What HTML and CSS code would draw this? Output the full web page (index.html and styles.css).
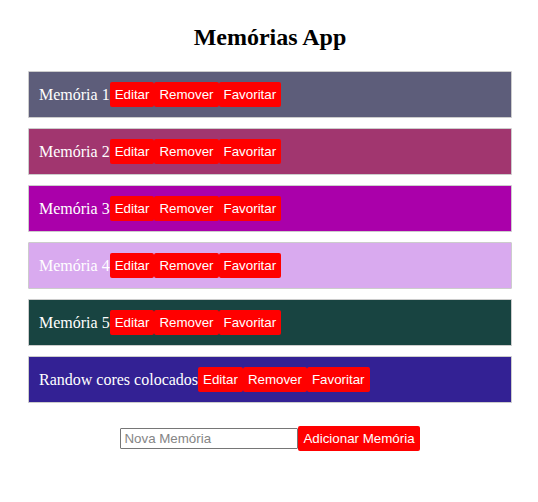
FILE: index.html
```html
<!DOCTYPE html>
<html lang="pt-BR">
<head>
<meta charset="utf-8">
<title>Memórias App</title>
<link rel="stylesheet" href="styles.css">
</head>
<body>
<main class="app">
  <h1 class="title">Memórias App</h1>
  <ul class="list">
    <li class="memory slate"><span>Memória 1</span><button type="button">Editar</button><button type="button">Remover</button><button type="button">Favoritar</button></li>
    <li class="memory berry"><span>Memória 2</span><button type="button">Editar</button><button type="button">Remover</button><button type="button">Favoritar</button></li>
    <li class="memory magenta"><span>Memória 3</span><button type="button">Editar</button><button type="button">Remover</button><button type="button">Favoritar</button></li>
    <li class="memory lilac"><span>Memória 4</span><button type="button">Editar</button><button type="button">Remover</button><button type="button">Favoritar</button></li>
    <li class="memory pine"><span>Memória 5</span><button type="button">Editar</button><button type="button">Remover</button><button type="button">Favoritar</button></li>
    <li class="memory indigo"><span>Randow cores colocados</span><button type="button">Editar</button><button type="button">Remover</button><button type="button">Favoritar</button></li>
  </ul>
  <form class="new-memory">
    <input type="text" placeholder="Nova Memória" aria-label="Nova Memória">
    <button type="submit">Adicionar Memória</button>
  </form>
</main>
</body>
</html>
```
FILE: styles.css
```css
* {
  box-sizing: border-box;
}

body {
  margin: 0;
  background: #fff;
  color: #000;
  font-family: "Liberation Serif", "Times New Roman", serif;
  font-size: 16px;
}

.app {
  padding: 24px 26px 24px 28px;
}

.title {
  margin: 0 0 20px;
  font-size: 24px;
  line-height: 27px;
  text-align: center;
}

.list {
  display: flex;
  flex-direction: column;
  gap: 10px;
  margin: 0;
  padding: 0;
  list-style: none;
}

.memory {
  display: flex;
  align-items: center;
  padding: 10px;
  border: 1px solid #ccc;
  border-radius: 1px;
  color: #fff;
}

.slate { background: #5d5d7a; }
.berry { background: #a1366f; }
.magenta { background: #aa00aa; }
.lilac { background: #d9aaef; }
.pine { background: #184441; }
.indigo { background: #332194; }

button {
  padding: 5px;
  border: 0;
  border-radius: 2px;
  background: #f00;
  color: #fff;
  font-family: "Liberation Sans", Arial, sans-serif;
  cursor: pointer;
}

.new-memory {
  display: flex;
  justify-content: center;
  align-items: center;
  margin-top: 23px;
}

.new-memory input {
  width: 178px;
  height: 21px;
  padding: 1px 3px;
  border: 1px solid #767676;
  border-radius: 1px;
  font-family: "Liberation Sans", Arial, sans-serif;
}

.new-memory input::placeholder {
  color: #858585;
}
```
